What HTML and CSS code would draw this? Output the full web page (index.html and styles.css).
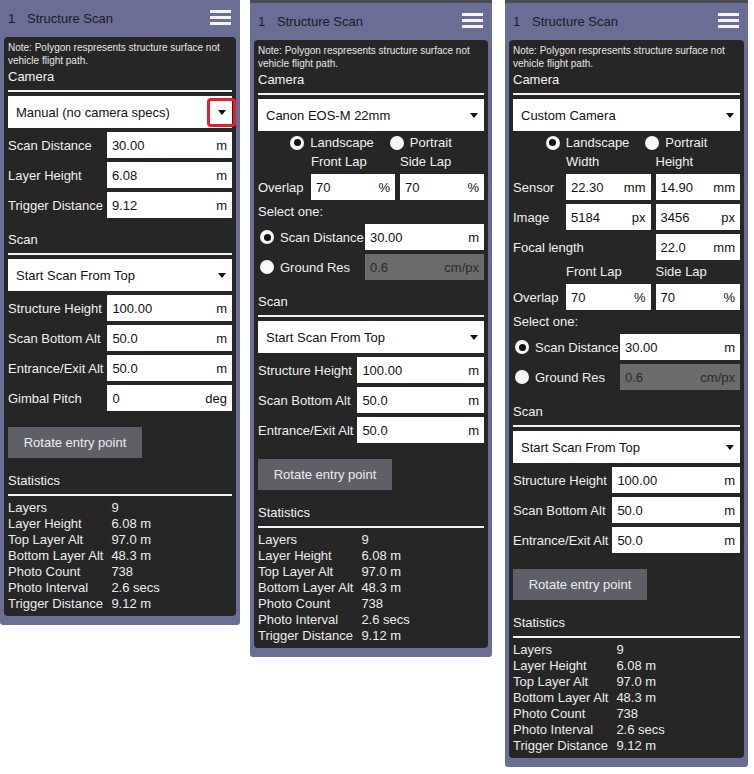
FILE: index.html
```html
<!DOCTYPE html>
<html>
<head>
<meta charset="utf-8">
<link rel="stylesheet" href="styles.css">
</head>
<body>
<div class="page">

  <!-- Panel 1 -->
  <div class="panel p1">
    <div class="header"><span class="idx">1</span><span class="title">Structure Scan</span><span class="menu"><i></i><i></i><i></i></span></div>
    <div class="body">
      <div class="note">Note: Polygon respresents structure surface not vehicle flight path.</div>
      <div class="sec-title">Camera</div>
      <div class="select">Manual (no camera specs)<span class="caret"></span><span class="highlight"></span></div>
      <div class="fields">
        <span class="flabel">Scan Distance</span><span class="input"><span>30.00</span><span>m</span></span>
        <span class="flabel">Layer Height</span><span class="input"><span>6.08</span><span>m</span></span>
        <span class="flabel">Trigger Distance</span><span class="input"><span>9.12</span><span>m</span></span>
      </div>
      <div class="sec-title gap">Scan</div>
      <div class="select">Start Scan From Top<span class="caret"></span></div>
      <div class="fields">
        <span class="flabel">Structure Height</span><span class="input"><span>100.00</span><span>m</span></span>
        <span class="flabel">Scan Bottom Alt</span><span class="input"><span>50.0</span><span>m</span></span>
        <span class="flabel">Entrance/Exit Alt</span><span class="input"><span>50.0</span><span>m</span></span>
        <span class="flabel">Gimbal Pitch</span><span class="input"><span>0</span><span>deg</span></span>
      </div>
      <div class="btn">Rotate entry point</div>
      <div class="sec-title stats-gap">Statistics</div>
      <div class="stats">
        <span>Layers</span><span>9</span>
        <span>Layer Height</span><span>6.08 m</span>
        <span>Top Layer Alt</span><span>97.0 m</span>
        <span>Bottom Layer Alt</span><span>48.3 m</span>
        <span>Photo Count</span><span>738</span>
        <span>Photo Interval</span><span>2.6 secs</span>
        <span>Trigger Distance</span><span>9.12 m</span>
      </div>
    </div>
  </div>

  <!-- Panel 2 -->
  <div class="panel p2">
    <div class="header"><span class="idx">1</span><span class="title">Structure Scan</span><span class="menu"><i></i><i></i><i></i></span></div>
    <div class="body">
      <div class="note">Note: Polygon respresents structure surface not vehicle flight path.</div>
      <div class="sec-title">Camera</div>
      <div class="select">Canon EOS-M 22mm<span class="caret"></span></div>
      <div class="radio-row">
        <span class="ropt"><span class="radio on"></span>Landscape</span>
        <span class="ropt"><span class="radio"></span>Portrait</span>
      </div>
      <div class="cam-grid">
        <span></span><span class="colhead">Front Lap</span><span class="colhead">Side Lap</span>
        <span class="flabel">Overlap</span><span class="input"><span>70</span><span>%</span></span><span class="input"><span>70</span><span>%</span></span>
      </div>
      <div class="select-one">Select one:</div>
      <div class="choice-grid">
        <span class="ropt"><span class="radio on"></span>Scan Distance</span><span class="input"><span>30.00</span><span>m</span></span>
        <span class="ropt"><span class="radio"></span>Ground Res</span><span class="input disabled"><span>0.6</span><span>cm/px</span></span>
      </div>
      <div class="sec-title gap">Scan</div>
      <div class="select">Start Scan From Top<span class="caret"></span></div>
      <div class="fields">
        <span class="flabel">Structure Height</span><span class="input"><span>100.00</span><span>m</span></span>
        <span class="flabel">Scan Bottom Alt</span><span class="input"><span>50.0</span><span>m</span></span>
        <span class="flabel">Entrance/Exit Alt</span><span class="input"><span>50.0</span><span>m</span></span>
      </div>
      <div class="btn">Rotate entry point</div>
      <div class="sec-title stats-gap">Statistics</div>
      <div class="stats">
        <span>Layers</span><span>9</span>
        <span>Layer Height</span><span>6.08 m</span>
        <span>Top Layer Alt</span><span>97.0 m</span>
        <span>Bottom Layer Alt</span><span>48.3 m</span>
        <span>Photo Count</span><span>738</span>
        <span>Photo Interval</span><span>2.6 secs</span>
        <span>Trigger Distance</span><span>9.12 m</span>
      </div>
    </div>
  </div>

  <!-- Panel 3 -->
  <div class="panel p3">
    <div class="header"><span class="idx">1</span><span class="title">Structure Scan</span><span class="menu"><i></i><i></i><i></i></span></div>
    <div class="body">
      <div class="note">Note: Polygon respresents structure surface not vehicle flight path.</div>
      <div class="sec-title">Camera</div>
      <div class="select">Custom Camera<span class="caret"></span></div>
      <div class="radio-row">
        <span class="ropt"><span class="radio on"></span>Landscape</span>
        <span class="ropt"><span class="radio"></span>Portrait</span>
      </div>
      <div class="cam-grid">
        <span></span><span class="colhead">Width</span><span class="colhead">Height</span>
        <span class="flabel">Sensor</span><span class="input"><span>22.30</span><span>mm</span></span><span class="input"><span>14.90</span><span>mm</span></span>
        <span class="flabel">Image</span><span class="input"><span>5184</span><span>px</span></span><span class="input"><span>3456</span><span>px</span></span>
        <span class="flabel span2">Focal length</span><span class="input"><span>22.0</span><span>mm</span></span>
        <span></span><span class="colhead">Front Lap</span><span class="colhead">Side Lap</span>
        <span class="flabel">Overlap</span><span class="input"><span>70</span><span>%</span></span><span class="input"><span>70</span><span>%</span></span>
      </div>
      <div class="select-one">Select one:</div>
      <div class="choice-grid">
        <span class="ropt"><span class="radio on"></span>Scan Distance</span><span class="input"><span>30.00</span><span>m</span></span>
        <span class="ropt"><span class="radio"></span>Ground Res</span><span class="input disabled"><span>0.6</span><span>cm/px</span></span>
      </div>
      <div class="sec-title gap">Scan</div>
      <div class="select">Start Scan From Top<span class="caret"></span></div>
      <div class="fields">
        <span class="flabel">Structure Height</span><span class="input"><span>100.00</span><span>m</span></span>
        <span class="flabel">Scan Bottom Alt</span><span class="input"><span>50.0</span><span>m</span></span>
        <span class="flabel">Entrance/Exit Alt</span><span class="input"><span>50.0</span><span>m</span></span>
      </div>
      <div class="btn">Rotate entry point</div>
      <div class="sec-title stats-gap">Statistics</div>
      <div class="stats">
        <span>Layers</span><span>9</span>
        <span>Layer Height</span><span>6.08 m</span>
        <span>Top Layer Alt</span><span>97.0 m</span>
        <span>Bottom Layer Alt</span><span>48.3 m</span>
        <span>Photo Count</span><span>738</span>
        <span>Photo Interval</span><span>2.6 secs</span>
        <span>Trigger Distance</span><span>9.12 m</span>
      </div>
    </div>
  </div>

</div>
</body>
</html>
```

FILE: styles.css
```css
* { box-sizing: border-box; }

html, body {
  margin: 0;
  padding: 0;
  background: #ffffff;
}

body {
  font-family: "Liberation Sans", Arial, sans-serif;
  font-size: 13px;
  color: #f0f0f0;
}

.page {
  display: flex;
  align-items: flex-start;
}

.panel {
  background: #6a6d94;
  padding: 0 4px 9px 4px;
  border-radius: 0 0 3px 3px;
}

.p1 { width: 240px; }
.p2 { width: 242px; margin-left: 10px; border-top: 3px solid #4a4b55; }
.p3 { width: 243px; margin-left: 13px; border-top: 3px solid #4a4b55; }

.header {
  height: 37px;
  display: flex;
  align-items: center;
  padding-left: 4px;
  color: #1b1b2a;
  font-size: 13px;
}

.idx { width: 19px; }

.title { flex: 1; }

.menu {
  display: flex;
  flex-direction: column;
  gap: 3px;
  margin-right: 5px;
  margin-top: -2px;
}

.menu i {
  display: block;
  width: 21px;
  height: 3px;
  background: #f4f4f8;
}

.body {
  background: #262626;
  border-radius: 4px;
  padding: 4px;
}

.note {
  font-size: 10px;
  line-height: 13px;
  color: #e6e6e6;
}

.sec-title {
  height: 25px;
  line-height: 20px;
  padding-bottom: 3px;
  border-bottom: 2px solid #f2f2f2;
  color: #f2f2f2;
  margin-bottom: 4px;
}

.sec-title.gap { margin-top: 12px; }
.sec-title.stats-gap { margin-top: 13px; }

.select {
  position: relative;
  height: 32px;
  background: #ffffff;
  color: #111111;
  display: flex;
  align-items: center;
  justify-content: space-between;
  padding: 0 6px 0 8px;
}

.caret {
  width: 0;
  height: 0;
  border-left: 4px solid transparent;
  border-right: 4px solid transparent;
  border-top: 5px solid #111111;
}

.highlight {
  position: absolute;
  left: 199px;
  top: 2px;
  width: 29px;
  height: 29px;
  border: 3px solid #e0222b;
  border-radius: 4px;
}

.fields {
  display: grid;
  grid-template-columns: auto 1fr;
  column-gap: 4px;
  row-gap: 4px;
  margin-top: 4px;
}

.flabel {
  align-self: center;
  color: #f0f0f0;
  white-space: nowrap;
}

.input {
  height: 26px;
  background: #ffffff;
  color: #111111;
  display: flex;
  align-items: center;
  justify-content: space-between;
  padding: 0 5px;
}

.input.disabled {
  background: #6b6b6b;
  color: #2a2a2a;
}

.btn {
  margin-top: 16px;
  width: 134px;
  height: 31px;
  background: #5f5f67;
  color: #ececec;
  display: flex;
  align-items: center;
  justify-content: center;
}

.stats {
  display: grid;
  grid-template-columns: auto 1fr;
  column-gap: 8px;
  line-height: 16px;
  color: #ececec;
}

.radio-row {
  height: 23px;
  display: flex;
  justify-content: center;
  align-items: center;
  gap: 16px;
}

.ropt {
  display: flex;
  align-items: center;
  gap: 6px;
  color: #f0f0f0;
  white-space: nowrap;
}

.radio {
  flex: none;
  width: 14px;
  height: 14px;
  border-radius: 50%;
  background: #f8f8f8;
  display: flex;
  align-items: center;
  justify-content: center;
}

.radio.on::after {
  content: "";
  width: 7px;
  height: 7px;
  border-radius: 50%;
  background: #111111;
}

.cam-grid {
  display: grid;
  grid-template-columns: 48px 1fr 1fr;
  column-gap: 5px;
  row-gap: 4px;
}

.colhead {
  line-height: 16px;
  color: #f0f0f0;
}

.span2 { grid-column: 1 / span 2; }

.select-one {
  height: 24px;
  line-height: 24px;
  color: #f0f0f0;
}

.choice-grid {
  display: grid;
  grid-template-columns: 103px 1fr;
  column-gap: 4px;
  row-gap: 4px;
}

.choice-grid .ropt { padding-left: 2px; }
```
